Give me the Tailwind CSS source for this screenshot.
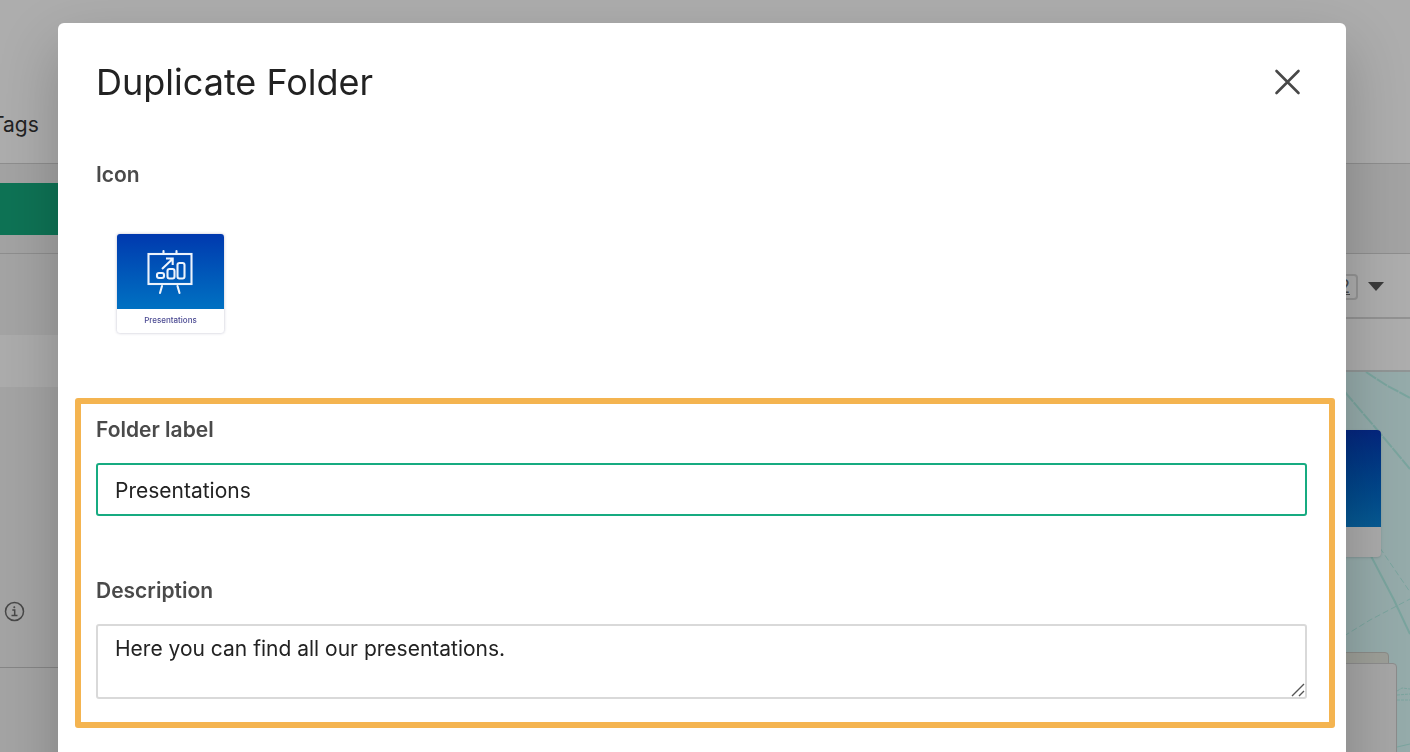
<!DOCTYPE html>
<html lang="en">
<head>
<meta charset="utf-8">
<meta name="viewport" content="width=device-width, initial-scale=1">
<title>Duplicate Folder</title>
<script src="https://cdn.jsdelivr.net/npm/@tailwindcss/browser@4"></script>
</head>
<body class="h-screen overflow-hidden bg-[#adadad] font-[Inter,sans-serif] text-[21px] text-[#222]">

  <!-- page behind the dialog -->
  <div class="flex h-screen flex-col overflow-hidden">
    <header class="flex h-[164px] shrink-0 items-end border-b border-[#8e8e8e] pb-[22px]">
      <a href="#" class="-ml-[9px] leading-8">Tags</a>
    </header>
    <div class="flex h-[90px] shrink-0 items-end border-b border-[#8e8e8e] bg-[#a3a3a3] pb-[18px]">
      <button class="h-[52px] w-40 bg-[#0e7355]" aria-label="Add"></button>
    </div>
    <div class="flex min-h-0 grow">
      <aside class="flex w-1/2 flex-col bg-[#a4a4a4]">
        <div class="h-[81px] shrink-0"></div>
        <div class="h-[52px] shrink-0 bg-[#acacac]"></div>
        <div class="flex h-[281px] shrink-0 items-end border-b border-[#868686] pb-[45px] pl-1">
          <svg class="size-[21px]" viewBox="0 0 21 21" fill="none" stroke="#484848" stroke-width="1.5">
            <circle cx="10.5" cy="10.5" r="9"/>
            <path d="M8.3 9h2.4v5.6M7.5 14.6h6"/>
            <circle cx="10.3" cy="6.2" r=".7" fill="#484848" stroke-width=".6"/>
          </svg>
        </div>
      </aside>
      <main class="flex w-1/2 flex-col">
        <div class="flex h-[65px] shrink-0 items-center justify-end gap-[10px] border-b-2 border-[#929292] pt-[2px] pr-[26px]">
          <span class="rounded-sm border-2 border-[#949494] px-[6px] text-lg leading-[22px] text-[#484848] underline">12</span>
          <svg class="h-[9px] w-4" viewBox="0 0 16 9"><path d="M0 0h16L8 9z" fill="#3b3b3b"/></svg>
        </div>
        <div class="h-[53px] shrink-0 border-b-2 border-[#909595]"></div>
        <div class="relative grow overflow-hidden bg-[#95abaa]">
          <svg class="absolute top-0 right-0 h-[380px] w-[66px]" viewBox="0 0 66 380" fill="none" stroke="#7aa49e">
            <path d="M22 0 42 13 66 26" stroke-width="2" stroke-dasharray="12 1"/>
            <path d="M0 19 35 60 66 97" stroke-width="2" stroke-dasharray="14 1"/>
            <path d="M27 184 50 228 66 262" stroke-width="2"/>
            <path d="M36 176 66 220M0 264 26 248 66 227" stroke-dasharray="6 3"/>
            <path d="M53 319l5-3 8 1M53 323l13-1M53 328h13" stroke-dasharray="3 1"/>
            <path d="M53 375l13-3"/>
          </svg>
          <div class="absolute top-[58px] right-[29px] h-[127px] w-[139px] rounded-sm bg-[#aaa] shadow">
            <div class="h-[97px] rounded-t-sm bg-linear-to-b from-[#05267e] to-[#075a92]"></div>
          </div>
          <div class="absolute top-[280px] right-[21px] h-6 w-32 rounded-sm border border-[#8b8b87] bg-[#9d9f98]"></div>
          <div class="absolute top-[291px] right-[13px] h-32 w-44 rounded-sm border border-[#8c8c8c] bg-[#a6a6a6]"></div>
        </div>
      </main>
    </div>
  </div>

  <div role="dialog" aria-labelledby="title" class="fixed top-[23px] right-16 left-[58px] h-[800px] rounded-md bg-white shadow-[0_24px_60px_rgba(0,0,0,0.22)]">
    <div class="flex items-center justify-between pt-[34px] pr-[44px] pl-[38px]">
      <h1 id="title" class="pt-px text-[36px] leading-[48px]">Duplicate Folder</h1>
      <button aria-label="Close">
        <svg class="size-7" viewBox="0 0 28 28" fill="none" stroke="#484848" stroke-width="2.6" stroke-linecap="round"><path d="M2.500 3l22 22M24.500 3l-22 22"/></svg>
      </button>
    </div>

    <h2 class="mt-[53px] pl-[38px] font-semibold leading-8 text-[#4a4a4a]">Icon</h2>
    <div class="mt-[43px] ml-[59px] h-[99px] w-[107px] overflow-hidden rounded-[3px] bg-white shadow-[0_0_3px_rgba(40,40,90,0.3)]">
      <div class="flex h-[75px] items-center justify-center bg-linear-to-b from-[#0038ae] to-[#0071c2]">
        <svg class="h-[46px] w-12" viewBox="0 0 48 46" fill="none" stroke="#edf3fc" stroke-width="2.1">
          <rect x="1.500" y="5" width="43" height="30"/>
          <path d="M16.500 2V5M29.500 2V5M15 37l-2 7M30.500 37l2 7" stroke-linecap="round"/>
          <path d="M15 20 25.500 10M19 9.500h6.700V16"/>
          <rect x="10" y="24" width="7" height="5" rx="2"/>
          <rect x="20.500" y="20" width="7" height="9.500" rx="2"/>
          <rect x="30.500" y="14" width="7" height="15.500" rx="2"/>
        </svg>
      </div>
      <p class="text-center text-[8px] font-medium leading-[22px] text-[#4b4a92]">Presentations</p>
    </div>

    <div class="mt-[65px] mr-[11px] ml-[17px] h-[330px] rounded-[3px] border-6 border-[#f4b450] pt-[10px] pr-[22px] pl-[15px]">
      <label for="label" class="block font-semibold leading-8 text-[#4a4a4a]">Folder label</label>
      <input id="label" type="text" value="Presentations" class="mt-[17px] block h-[53px] w-full rounded-[3px] border-2 border-[#17ab81] px-[17px] pt-[2px] outline-none">
      <label for="description" class="mt-[59px] block font-semibold leading-8 text-[#4a4a4a]">Description</label>
      <div class="relative mt-[17px]">
        <textarea id="description" class="block h-[75px] w-full resize-none rounded-[3px] border-2 border-[#d9d9d9] px-[17px] py-[7px] leading-8 outline-none">Here you can find all our presentations.</textarea>
        <svg class="pointer-events-none absolute right-[2px] bottom-[2px] size-[14px]" viewBox="0 0 14 14" stroke="#555" stroke-width="1.4"><path d="M1 13 13 1M8 13l5-5"/></svg>
      </div>
    </div>
  </div>
</body>
</html>
